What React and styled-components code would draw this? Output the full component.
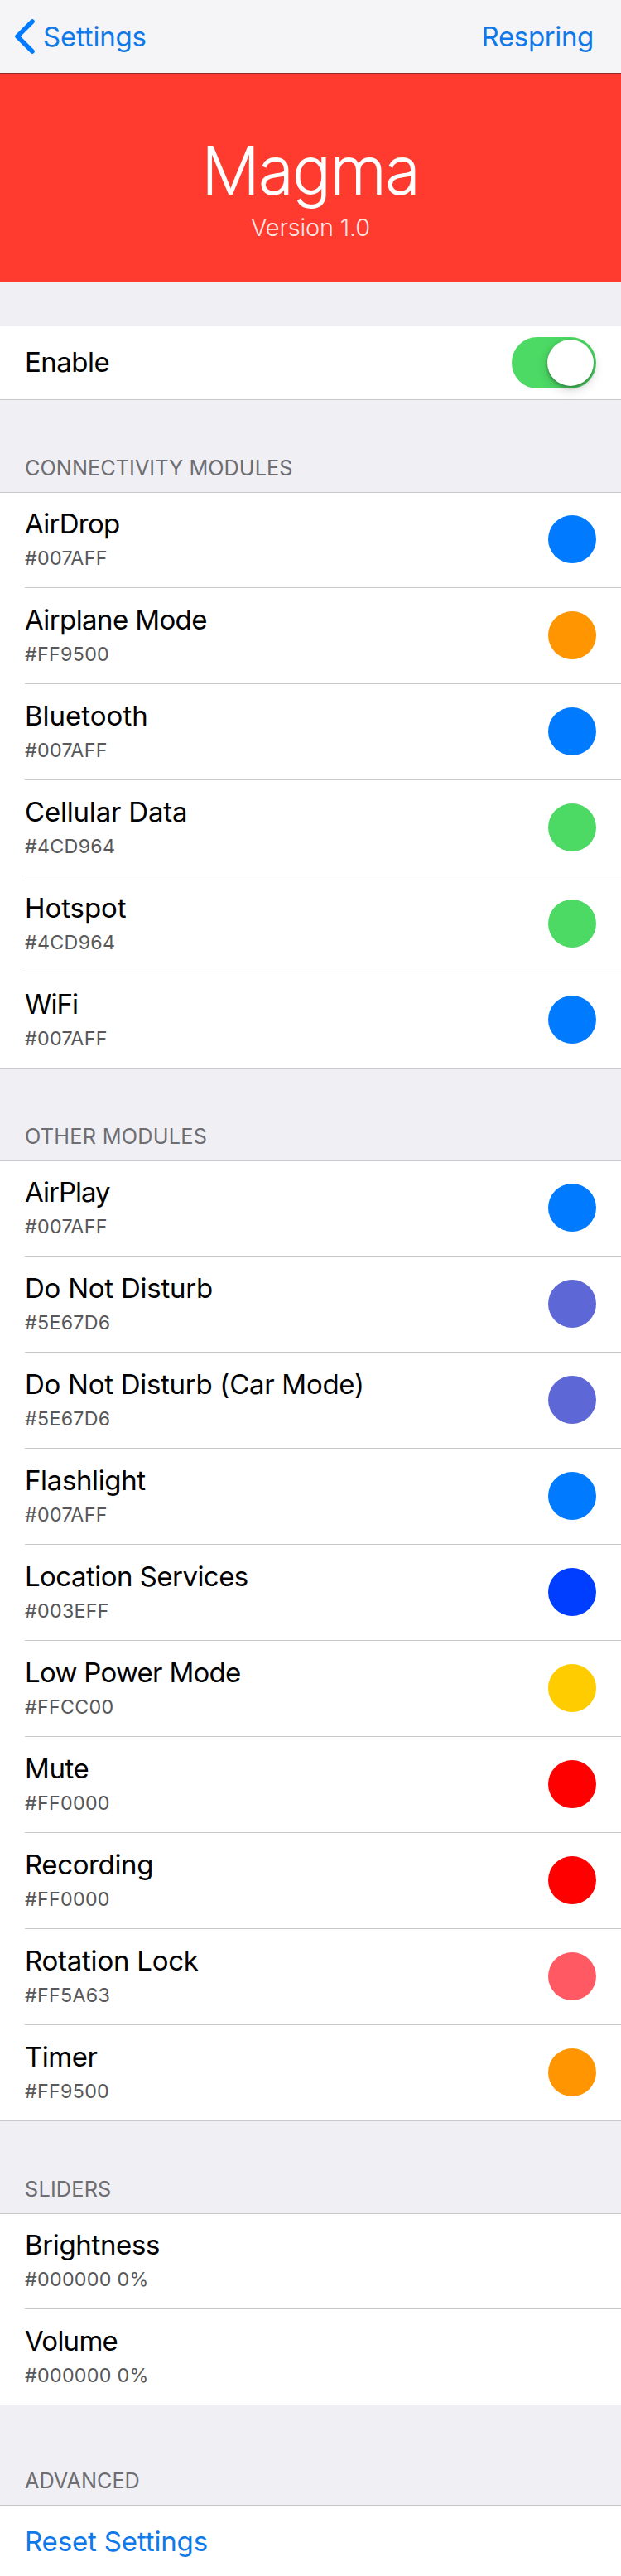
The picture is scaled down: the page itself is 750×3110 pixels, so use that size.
import { useState } from 'react';
import styled, { createGlobalStyle } from 'styled-components';

const connectivity = [
  { name: "AirDrop", value: "#007AFF", tracking: -0.72 },
  { name: "Airplane Mode", value: "#FF9500", tracking: -0.6 },
  { name: "Bluetooth", value: "#007AFF", tracking: 0 },
  { name: "Cellular Data", value: "#4CD964", tracking: -0.2 },
  { name: "Hotspot", value: "#4CD964", tracking: -0.07 },
  { name: "WiFi", value: "#007AFF", tracking: -1 },
];

const others = [
  { name: "AirPlay", value: "#007AFF", tracking: -1 },
  { name: "Do Not Disturb", value: "#5E67D6", tracking: -0.24 },
  { name: "Do Not Disturb (Car Mode)", value: "#5E67D6", tracking: -0.28 },
  { name: "Flashlight", value: "#007AFF", tracking: -0.37 },
  { name: "Location Services", value: "#003EFF", tracking: -0.54 },
  { name: "Low Power Mode", value: "#FFCC00", tracking: -0.72 },
  { name: "Mute", value: "#FF0000", tracking: -0.4 },
  { name: "Recording", value: "#FF0000", tracking: -0.38 },
  { name: "Rotation Lock", value: "#FF5A63", tracking: -0.24 },
  { name: "Timer", value: "#FF9500", tracking: -0.5 },
];

const sliders = [
  { name: "Brightness", value: "#000000 0%", tracking: -0.35 },
  { name: "Volume", value: "#000000 0%", tracking: -0.75 },
];

const ModuleList = ({ items, swatches = true }) => (
  <List>
    {items.map((item) => (
      <Row key={item.name}>
        <div>
          <Title $tracking={item.tracking}>{item.name}</Title>
          <Detail>{item.value}</Detail>
        </div>
        {swatches && <Swatch $color={item.value} />}
      </Row>
    ))}
  </List>
);

const App = () => {
  const [enabled, setEnabled] = useState(true);

  return <>
    <GlobalStyle />
    <NavBar>
      <BackButton>
        <svg width="26" height="44" viewBox="0 0 26 44" fill="none">
          <path d="M22 4L4 22L22 40" stroke="#007aff" strokeWidth="5.6" strokeLinecap="round" strokeLinejoin="round" />
        </svg>
        Settings
      </BackButton>
      <NavButton>Respring</NavButton>
    </NavBar>
    <Banner>
      <BannerTitle>Magma</BannerTitle>
      <Version>Version 1.0</Version>
    </Banner>

    <Spacer />
    <List>
      <SwitchRow>
        <SwitchLabel $tracking={-0.5}>Enable</SwitchLabel>
        <Switch role="switch" aria-checked={enabled} $on={enabled} onClick={() => setEnabled(!enabled)}>
          <Knob />
        </Switch>
      </SwitchRow>
    </List>

    <SectionHeader $tracking={0.05}>CONNECTIVITY MODULES</SectionHeader>
    <ModuleList items={connectivity} />

    <SectionHeader $tracking={0.25}>OTHER MODULES</SectionHeader>
    <ModuleList items={others} />

    <SectionHeader $tracking={0.2}>SLIDERS</SectionHeader>
    <ModuleList items={sliders} swatches={false} />

    <SectionHeader $tall $tracking={0}>ADVANCED</SectionHeader>
    <ResetList>
      <ResetButton>Reset Settings</ResetButton>
    </ResetList>
  </>
};

export default App;


const GlobalStyle = createGlobalStyle`
  * {
    box-sizing: border-box;
  }
  body {
    margin: 0;
    background: #efeff4;
    font-family: Inter, "Liberation Sans", sans-serif;
  }
  button {
    padding: 0;
    border: 0;
    background: none;
    font-family: inherit;
    cursor: pointer;
  }
`
const NavBar = styled.nav`
  display: flex;
  align-items: center;
  justify-content: space-between;
  height: 89px;
  padding: 0 33px 0 17px;
  background: #f5f5f7;
  border-bottom: 1px solid #8c2c2a;
`
const NavButton = styled.button`
  font-size: 33px;
  line-height: 40px;
  letter-spacing: -0.35px;
  color: #0f79ea;
`
const BackButton = styled(NavButton)`
  display: flex;
  align-items: center;
  gap: 9px;
  letter-spacing: -0.2px;
`
const Banner = styled.header`
  height: 251px;
  padding-top: 72px;
  background: #ff3b30;
  color: #fff;
  text-align: center;
`
const BannerTitle = styled.h1`
  margin: 0 0 7px;
  font-size: 78px;
  font-weight: 200;
  line-height: 90px;
  letter-spacing: -1px;
  -webkit-text-stroke: 1.8px #fff;
`
const Version = styled.p`
  margin: 0;
  font-size: 29px;
  font-weight: 300;
  line-height: 34px;
  letter-spacing: -0.2px;
  color: rgba(255, 255, 255, 0.9);
`
const Spacer = styled.div`
  height: 53px;
`
const List = styled.section`
  background: #fff;
  box-shadow: inset 0 1px 0 #c8c7cc, inset 0 -1px 0 #c8c7cc;
`
const Row = styled.div`
  display: flex;
  justify-content: space-between;
  height: 116px;
  margin-left: 30px;
  padding: 18px 30px 0 0;
  border-bottom: 1px solid #c8c7cc;
`
const SwitchRow = styled.div`
  display: flex;
  align-items: center;
  justify-content: space-between;
  height: 90px;
  padding: 0 30px;
`
const Title = styled.div`
  font-size: 33px;
  line-height: 40px;
  letter-spacing: ${({ $tracking }) => $tracking}px;
  color: #000;
`
const SwitchLabel = styled(Title)`
  padding-bottom: 2px;
`
const Detail = styled.div`
  margin-top: 7px;
  font-size: 23.25px;
  line-height: 30px;
  letter-spacing: 0.28px;
  color: #58585a;
`
const Swatch = styled.div`
  width: 58px;
  height: 58px;
  margin-top: 10px;
  border-radius: 50%;
  background: ${({ $color }) => $color};
`
const Switch = styled.button`
  display: flex;
  align-items: center;
  justify-content: ${({ $on }) => $on ? 'flex-end' : 'flex-start'};
  width: 102px;
  height: 62px;
  padding: 0 3px;
  border-radius: 31px;
  background: ${({ $on }) => $on ? '#4cd964' : '#e5e5ea'};
`
const Knob = styled.span`
  width: 56px;
  height: 56px;
  border-radius: 50%;
  background: #fff;
  box-shadow: 0 5px 14px rgba(0, 0, 0, 0.16), 0 2px 4px rgba(0, 0, 0, 0.35);
`
const SectionHeader = styled.h2`
  display: flex;
  align-items: flex-end;
  height: ${({ $tall }) => $tall ? 120 : 111}px;
  margin: 0;
  padding: 0 30px 14px;
  font-size: 25.25px;
  font-weight: 400;
  line-height: 30px;
  letter-spacing: ${({ $tracking }) => $tracking}px;
  color: #6d6d72;
`
const ResetList = styled.section`
  height: 86px;
  padding: 23px 30px 0;
  background: #fff;
  border-top: 1px solid #c8c7cc;
`
const ResetButton = styled.button`
  display: block;
  font-size: 33px;
  line-height: 40px;
  letter-spacing: -0.15px;
  color: #0f79ea;
`
